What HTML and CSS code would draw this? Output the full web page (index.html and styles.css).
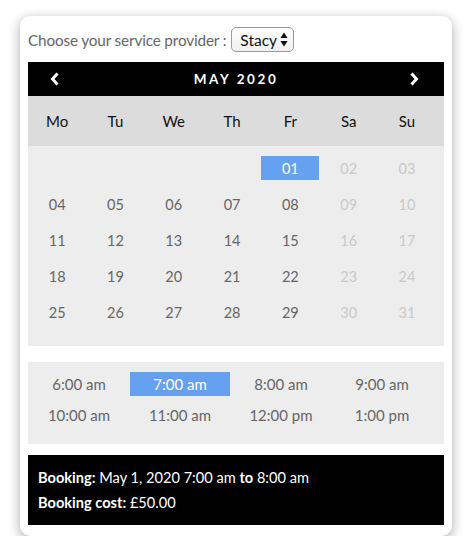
FILE: index.html
```html
<!DOCTYPE html>
<html>
<head>
<meta charset="utf-8">
<link rel="stylesheet" href="styles.css">
</head>
<body>
<div class="card">
  <div class="provider">
    <span class="label">Choose your service provider :</span>
    <div class="select"><span>Stacy</span>
      <svg width="8" height="15" viewBox="0 0 8 15"><path d="M4 0.5 L7.6 6 L0.4 6 Z M4 14.5 L7.6 9 L0.4 9 Z" fill="#111"/></svg>
    </div>
  </div>
  <div class="cal-head">
    <span class="nav">
      <svg width="10" height="14" viewBox="0 0 10 14"><path d="M7.5 1.5 L2.5 7 L7.5 12.5" fill="none" stroke="#fff" stroke-width="3"/></svg>
    </span>
    <span class="month">MAY 2020</span>
    <span class="nav">
      <svg width="10" height="14" viewBox="0 0 10 14"><path d="M2.5 1.5 L7.5 7 L2.5 12.5" fill="none" stroke="#fff" stroke-width="3"/></svg>
    </span>
  </div>
  <div class="dow">
    <span>Mo</span><span>Tu</span><span>We</span><span>Th</span><span>Fr</span><span>Sa</span><span>Su</span>
  </div>
  <div class="days">
    <span></span><span></span><span></span><span></span><span class="sel">01</span><span class="off">02</span><span class="off">03</span>
    <span>04</span><span>05</span><span>06</span><span>07</span><span>08</span><span class="off">09</span><span class="off">10</span>
    <span>11</span><span>12</span><span>13</span><span>14</span><span>15</span><span class="off">16</span><span class="off">17</span>
    <span>18</span><span>19</span><span>20</span><span>21</span><span>22</span><span class="off">23</span><span class="off">24</span>
    <span>25</span><span>26</span><span>27</span><span>28</span><span>29</span><span class="off">30</span><span class="off">31</span>
  </div>
  <div class="slots">
    <span>6:00 am</span><span class="sel">7:00 am</span><span>8:00 am</span><span>9:00 am</span>
    <span>10:00 am</span><span>11:00 am</span><span>12:00 pm</span><span>1:00 pm</span>
  </div>
  <div class="booking">
    <div><b>Booking:</b> May 1, 2020 7:00 am <b>to</b> 8:00 am</div>
    <div><b>Booking cost:</b> £50.00</div>
  </div>
</div>
</body>
</html>
```
FILE: styles.css
```css
html, body { margin: 0; padding: 0; background: #fff; }
body { padding: 16px 0 0 20px; font-family: "Lato", "Liberation Sans", sans-serif; }
.card {
  width: 432px;
  box-sizing: border-box;
  padding: 8px 8px 11px 8px;
  background: #fff;
  border-radius: 10px;
  box-shadow: 0 3px 12px rgba(0,0,0,0.35);
}
.provider {
  display: flex;
  align-items: center;
  gap: 5px;
  margin: 3px 0 10px 0;
  height: 25px;
}
.label { color: #666; font-size: 15.3px; letter-spacing: -0.15px; }
.select {
  box-sizing: border-box;
  height: 25px;
  width: 63px;
  border: 1px solid #9a9a9a;
  border-radius: 5px;
  background: linear-gradient(#fdfdfd, #f0f0f0);
  display: flex;
  align-items: center;
  justify-content: space-between;
  padding: 0 5px 0 8px;
  font-size: 15.5px;
  color: #111;
}
.select svg { display: block; }
.cal-head {
  background: #000;
  height: 34px;
  display: flex;
  align-items: center;
  justify-content: space-between;
  padding: 0 25px 0 22px;
  color: #fff;
}
.nav { width: 10px; display: flex; }
.month { font-weight: bold; font-size: 13.5px; letter-spacing: 2.6px; margin-left: 3px; }
.dow {
  background: #dcdcdc;
  height: 50px;
  display: grid;
  grid-template-columns: repeat(7, 58.3px);
  align-items: center;
  text-align: center;
  font-size: 15px;
  color: #111;
}
.days {
  background: #ededed;
  display: grid;
  grid-template-columns: repeat(7, 58.3px);
  grid-auto-rows: 24px;
  row-gap: 12px;
  padding: 10px 0 22px 0;
  text-align: center;
  font-size: 14.5px;
  color: #666;
}
.days span { display: flex; align-items: center; justify-content: center; }
.days .off { color: #c9c9c9; }
.sel { background: #66a1ef; color: #fff !important; }
.slots {
  margin-top: 16px;
  background: #ededed;
  display: grid;
  grid-template-columns: repeat(4, 100px);
  column-gap: 1px;
  grid-auto-rows: 24px;
  row-gap: 7px;
  padding: 10px 0 17px 1px;
  font-size: 15px;
  color: #666;
}
.slots span { display: flex; align-items: center; justify-content: center; }
.booking {
  margin-top: 11px;
  background: #000;
  color: #fff;
  padding: 10px 10px;
  font-size: 14.6px;
  line-height: 25px;
}
.booking b { font-weight: bold; }
```
